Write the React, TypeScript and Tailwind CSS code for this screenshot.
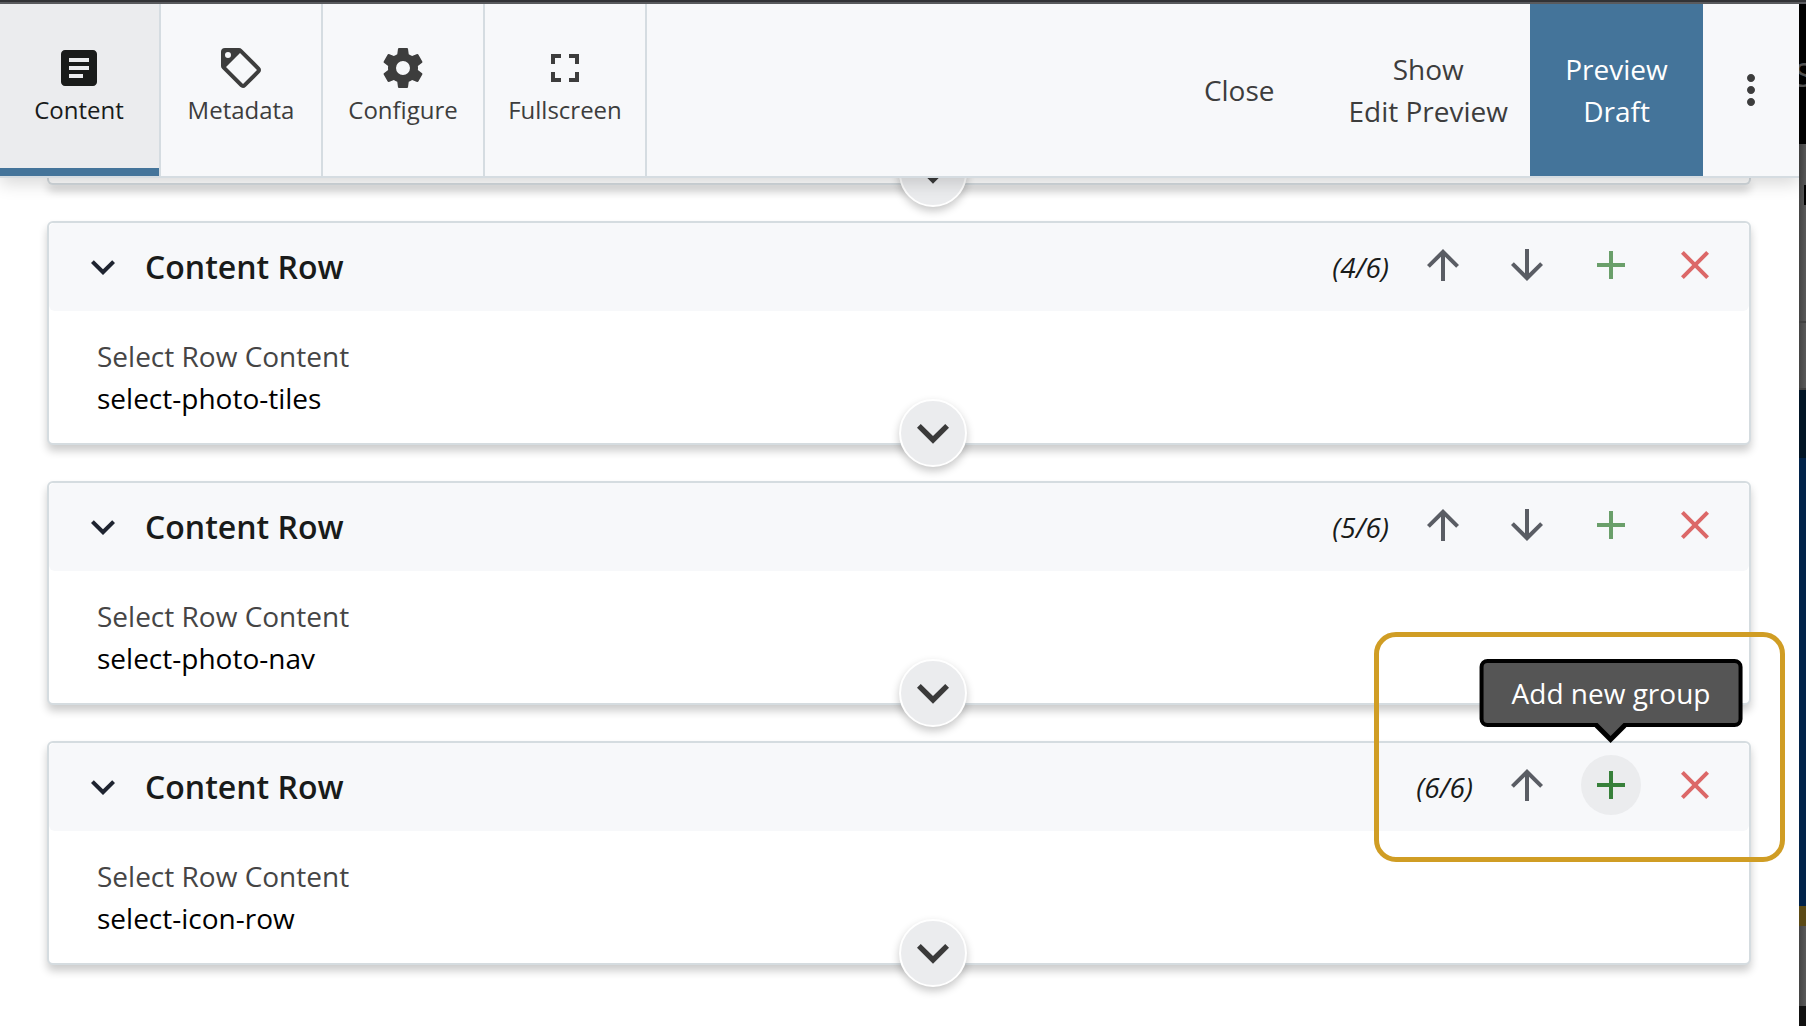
import React from "react";
import {
  MdAdd,
  MdArrowDownward,
  MdArrowUpward,
  MdArticle,
  MdClose,
  MdExpandMore,
  MdFullscreen,
  MdMoreVert,
} from "react-icons/md";

const rows = [
  { id: 4, value: "select-photo-tiles" },
  { id: 5, value: "select-photo-nav" },
  { id: 6, value: "select-icon-row" },
];

const TOTAL = 6;

function TagIcon() {
  return (
    <svg viewBox="0 0 24 24" className="size-12" fill="currentColor" aria-hidden="true">
      <path
        fillRule="evenodd"
        d="M21.41 11.58l-9-9A2 2 0 0 0 11 2H4a2 2 0 0 0-2 2v7a2 2 0 0 0 .59 1.42l9 9A2 2 0 0 0 13 22a2 2 0 0 0 1.41-.59l7-7A2 2 0 0 0 22 13a2 2 0 0 0-.59-1.42zM13 20l-8.5-8.5 7-7L20 13zM5.5 4a1.5 1.5 0 1 1 0 3 1.5 1.5 0 0 1 0-3z"
      />
    </svg>
  );
}

function CogIcon() {
  return (
    <svg viewBox="0 0 24 24" className="size-12" fill="currentColor" aria-hidden="true">
      <path d="M12 15.5A3.5 3.5 0 0 1 8.5 12 3.5 3.5 0 0 1 12 8.5a3.5 3.5 0 0 1 3.5 3.5 3.5 3.5 0 0 1-3.5 3.5m7.43-2.53c.04-.32.07-.64.07-.97s-.03-.66-.07-1l2.11-1.63c.19-.15.24-.42.12-.64l-2-3.46c-.12-.22-.39-.31-.61-.22l-2.49 1c-.52-.39-1.06-.73-1.69-.98l-.37-2.65A.506.506 0 0 0 14 2h-4c-.25 0-.46.18-.5.42l-.37 2.65c-.63.25-1.17.59-1.69.98l-2.49-1c-.22-.09-.49 0-.61.22l-2 3.46c-.13.22-.07.49.12.64L4.57 11c-.04.34-.07.67-.07 1s.03.65.07.97l-2.11 1.66c-.19.15-.25.42-.12.64l2 3.46c.12.22.39.3.61.22l2.49-1.01c.52.4 1.06.74 1.69.99l.37 2.65c.04.24.25.42.5.42h4c.25 0 .46-.18.5-.42l.37-2.65c.63-.26 1.17-.59 1.69-.99l2.49 1.01c.22.08.49 0 .61-.22l2-3.46c.12-.22.07-.49-.12-.64z" />
    </svg>
  );
}

function Tab({ label, icon, active }: { label: string; icon: React.ReactNode; active?: boolean }) {
  return (
    <button
      className={
        "flex w-[162px] flex-col items-center border-r-2 border-[#d5dce1] pt-10 text-2xl leading-9 " +
        (active ? "bg-[#ebecee] text-[#191b1a] shadow-[inset_0_-8px_0_#44749a]" : "text-[#3d3d3d]")
      }
    >
      {icon}
      {label}
    </button>
  );
}

function IconButton({ label, className, children }: { label: string; className: string; children: React.ReactNode }) {
  return (
    <button aria-label={label} className={"flex size-[60px] items-center justify-center rounded-full " + className}>
      {children}
    </button>
  );
}

function ExpandButton() {
  return (
    <button
      aria-label="Expand row"
      className="absolute -bottom-6 left-1/2 flex size-[68px] items-center justify-center rounded-full border-2 border-white bg-[#ebecee] text-[#3a3a3a] shadow-[0_4px_8px_rgba(0,0,0,0.22)]"
    >
      <MdExpandMore className="size-16 shrink-0" />
    </button>
  );
}

function ContentRow({ id, value }: { id: number; value: string }) {
  const last = id === TOTAL;
  return (
    <section className="relative rounded-md border-2 border-[#d5dce0] bg-white shadow-[0_6px_8px_rgba(0,0,0,0.2)]">
      <div className="flex h-[88px] items-center rounded-md bg-[#f7f8fa] pr-6 pl-[30px]">
        <button aria-label="Collapse row" className="text-[#1f2430]">
          <MdExpandMore className="size-12" />
        </button>
        <h2 className="ml-[18px] text-[32px] leading-[48px] font-semibold text-[#191b1a]">Content Row</h2>
        <span className="mr-6 ml-auto text-[28px] leading-[42px] text-[#191b1a] italic">
          ({id}/{TOTAL})
        </span>
        <div className="flex gap-6 pb-1">
          <IconButton label="Move up" className="text-[#5a5d64]">
            <MdArrowUpward className="size-12" />
          </IconButton>
          {!last && (
            <IconButton label="Move down" className="text-[#5a5d64]">
              <MdArrowDownward className="size-12" />
            </IconButton>
          )}
          <div className="relative">
            <IconButton label="Add new group" className={last ? "bg-[#ebecee] text-[#37803a]" : "text-[#6a9f6a]"}>
              <MdAdd className="size-12" />
            </IconButton>
            {last && <Tooltip text="Add new group" />}
          </div>
          <IconButton label="Remove" className="text-[#dc6868]">
            <MdClose className="size-12" />
          </IconButton>
        </div>
      </div>
      <div className="px-12 py-6 text-[28px] leading-[42px]">
        <p className="text-[#454545]">Select Row Content</p>
        <p className="text-black">{value}</p>
      </div>
      <ExpandButton />
      {last && (
        <div className="pointer-events-none absolute -top-[111px] -right-9 h-[230px] w-[411px] rounded-[22px] border-5 border-[#d09d24]" />
      )}
    </section>
  );
}

function Tooltip({ text }: { text: string }) {
  return (
    <div
      role="tooltip"
      className="absolute bottom-full left-1/2 z-10 mb-7 -translate-x-1/2 rounded-lg border-4 border-black bg-[#555555] px-7 py-[9px] text-[28px] leading-[42px] whitespace-nowrap text-white"
    >
      {text}
      <svg viewBox="0 0 32 20" className="absolute top-full left-1/2 h-5 w-8 -translate-x-1/2" aria-hidden="true">
        <path d="M0 0h32v4L16 20 0 4z" fill="#000" />
        <path d="M3 0h26L16 13z" fill="#555555" />
      </svg>
    </div>
  );
}

// sliver of the dimmed site that shows beside the panel
function PageEdge() {
  return (
    <div className="flex w-[7px] flex-col overflow-hidden" aria-hidden="true">
      <div className="h-[140px] bg-black pt-[50px]">
        <span className="-ml-1 block text-[32px] leading-[42px] text-[#555555]">S</span>
      </div>
      <div className="flex h-[177px] justify-end bg-linear-to-r from-[#444444] to-[#5a5a5a] pt-[41px]">
        <div className="h-5 w-0.5 bg-black" />
      </div>
      <div className="h-[69px] border-y-2 border-[#404040] bg-linear-to-r from-[#444444] to-[#5a5a5a]" />
      <div className="h-[68px] bg-[#021526]" />
      <div className="grow bg-[#01234a]" />
      <div className="h-5 bg-[#5b4a16]" />
      <div className="h-20 bg-linear-to-r from-[#444444] to-[#5a5a5a]" />
      <div className="h-5 bg-[#111111]" />
    </div>
  );
}

export default function App() {
  return (
    <div className="flex min-h-screen flex-col bg-white font-['Open_Sans',sans-serif]">
      <div className="h-1 border-b-2 border-[#5c5d61] bg-[#333437]" />
      <div className="flex grow">
        <div className="flex min-w-0 grow flex-col">
          <header className="relative z-20 flex h-[174px] border-b-2 border-[#d5dce1] bg-[#f7f8fa] shadow-[0_6px_16px_rgba(0,0,0,0.15)]">
            <nav className="-ml-px flex">
              <Tab label="Content" icon={<MdArticle className="size-12" />} active />
              <Tab label="Metadata" icon={<TagIcon />} />
              <Tab label="Configure" icon={<CogIcon />} />
              <Tab label="Fullscreen" icon={<MdFullscreen className="size-12" />} />
            </nav>
            <div className="ml-auto flex text-[28px] leading-[42px] text-[#3d3d3d]">
              <button className="px-9">Close</button>
              <button className="pr-[22px] pl-[38px]">
                Show
                <br />
                Edit Preview
              </button>
              <button className="w-[173px] bg-[#44749a] text-white">
                Preview
                <br />
                Draft
              </button>
              <button aria-label="More options" className="px-6">
                <MdMoreVert className="size-12" />
              </button>
            </div>
          </header>
          <main className="flex grow flex-col gap-9 overflow-hidden pr-12 pb-10 pl-[47px]">
            <div className="relative h-[7px] rounded-b-md border-2 border-t-0 border-[#d5dce0] bg-white shadow-[0_6px_8px_rgba(0,0,0,0.2)]">
              <ExpandButton />
            </div>
            {rows.map((row) => (
              <ContentRow key={row.id} id={row.id} value={row.value} />
            ))}
          </main>
        </div>
        <PageEdge />
      </div>
    </div>
  );
}
